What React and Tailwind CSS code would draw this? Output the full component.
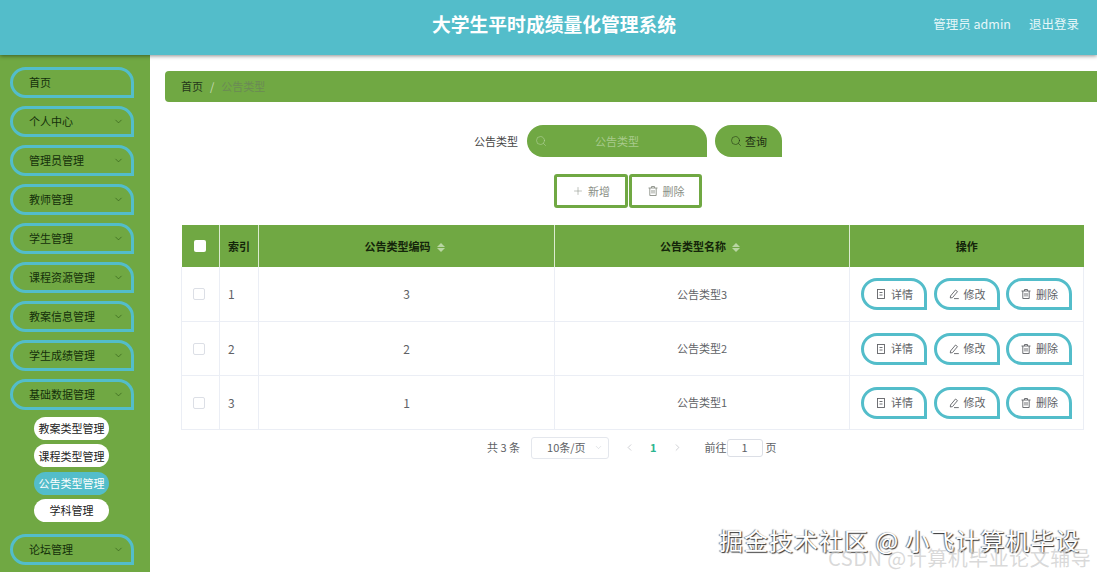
import { ChevronDown, ChevronLeft, ChevronRight, Plus, Search } from 'lucide-react';

const font = "font-['Noto_Sans_CJK_SC','Noto_Sans',sans-serif]";

const topMenus = ['个人中心', '管理员管理', '教师管理', '学生管理', '课程资源管理', '教案信息管理', '学生成绩管理', '基础数据管理'];
const subMenus = ['教案类型管理', '课程类型管理', '公告类型管理', '学科管理'];
const rows = [
  { index: 1, code: 3, name: '公告类型3' },
  { index: 2, code: 2, name: '公告类型2' },
  { index: 3, code: 1, name: '公告类型1' },
];

// element-ui style line icons, thin strokes
function TicketsIcon() {
  return (
    <svg width="12" height="12" viewBox="0 0 12 12" fill="none" stroke="currentColor" strokeWidth="0.9">
      <rect x="2.5" y="1.5" width="7" height="9" />
      <path d="M4.5 4.5H7.5M4.5 7H7.5" />
    </svg>
  );
}

function EditIcon() {
  return (
    <svg width="12" height="12" viewBox="0 0 12 12" fill="none" stroke="currentColor" strokeWidth="0.9">
      <path d="M2.5 8L7.5 2L9.5 3.6L4.5 9.6L2.3 10Z" />
      <path d="M6 10.6H10.8" />
    </svg>
  );
}

function DeleteIcon() {
  return (
    <svg width="12" height="12" viewBox="0 0 12 12" fill="none" stroke="currentColor" strokeWidth="0.9">
      <path d="M1.5 3H10.5M4.5 3V1.5H7.5V3M2.8 3V10.5H9.2V3M5 5V8.5M7 5V8.5" />
    </svg>
  );
}

function MenuItem({ label, arrow = true }) {
  return (
    <div className="flex h-[31px] w-[124px] shrink-0 items-center justify-between rounded-[20px_20px_0_20px] border-[3px] border-[#53bdca] pb-[1px] pl-[16px] pr-[7px] text-[11px] text-[#14300a]">
      <span>{label}</span>
      {arrow && <ChevronDown size={11} strokeWidth={1.4} className="text-[#2f5a16]" />}
    </div>
  );
}

function SortCaret() {
  return (
    <span className="ml-[6px] inline-flex flex-col align-middle text-[#b9d6a3]">
      <span className="mb-[1px] h-0 w-0 border-x-[4px] border-b-[4px] border-x-transparent border-b-current" />
      <span className="h-0 w-0 border-x-[4px] border-t-[4px] border-x-transparent border-t-current" />
    </span>
  );
}

function RowButton({ icon: Icon, label }) {
  return (
    <button className="flex h-[32px] w-[66px] items-center justify-center gap-[4px] rounded-[20px_20px_0_20px] border-[3px] border-[#53bdca] bg-white text-[11px] text-[#606266]">
      <Icon />
      {label}
    </button>
  );
}

export default function App() {
  return (
    <div className={`relative flex h-[572px] w-[1097px] flex-col overflow-hidden bg-white ${font}`}>
      {/* Header */}
      <header className="relative z-10 flex h-[55px] shrink-0 items-center bg-[#53bdca] pb-[7px] pr-[18px] shadow-[0_1px_4px_rgba(0,0,0,0.45)]">
        <h1 className="ml-[432px] text-[18.8px] font-bold text-white">大学生平时成绩量化管理系统</h1>
        <div className="ml-auto flex gap-[18px] text-[12.5px] text-[#e6f7f9]">
          <span>管理员 admin</span>
          <span>退出登录</span>
        </div>
      </header>

      <div className="flex min-h-0 flex-1">
        {/* Sidebar */}
        <aside className="flex w-[150px] shrink-0 flex-col items-start bg-[#70a843] pl-[10px] pt-[12px]">
          <div className="flex flex-col gap-[8px]">
            <MenuItem label="首页" arrow={false} />
            {topMenus.map((m) => (
              <MenuItem key={m} label={m} />
            ))}
          </div>
          <div className="ml-[24px] mt-[7px] flex flex-col gap-[4.4px]">
            {subMenus.map((m) => (
              <div
                key={m}
                className={`flex h-[23px] w-[75px] items-center justify-center rounded-full text-[11px] ${
                  m === '公告类型管理' ? 'bg-[#53bdca] text-white' : 'bg-white text-[#222222]'
                }`}
              >
                {m}
              </div>
            ))}
          </div>
          <div className="mt-[12px]">
            <MenuItem label="论坛管理" />
          </div>
        </aside>

        {/* Main */}
        <main className="min-w-0 flex-1 pl-[15px] pt-[16px]">
          <div className="flex h-[31px] items-center rounded-l-[4px] bg-[#70a843] pb-[1px] pl-[16px] text-[11px]">
            <span className="text-[#24361a]">首页</span>
            <span className="mx-[7px] text-[#c9dcb9]">/</span>
            <span className="text-[#6b8a55]">公告类型</span>
          </div>

          {/* Search */}
          <div className="mt-[23px] flex h-[32px] items-center pl-[309px]">
            <span className="w-[53px] text-[11px] text-[#444444]">公告类型</span>
            <div className="relative flex h-[32px] w-[180px] items-center justify-center rounded-[20px_20px_0_20px] bg-[#70a843] text-[11px] text-[#a9cb8d]">
              <Search size={12} strokeWidth={1.1} className="absolute left-[8px] top-[10px] text-[#b8d4a2]" />
              公告类型
            </div>
            <button className="ml-[8px] flex h-[32px] w-[67px] items-center justify-center gap-[3px] rounded-[20px_20px_0_20px] bg-[#70a843] text-[11px] text-[#1d2f12]">
              <Search size={12} strokeWidth={1.1} />
              查询
            </button>
          </div>

          {/* Actions */}
          <div className="mt-[17px] flex pl-[389px]">
            <button className="flex h-[34px] w-[74px] items-center justify-center gap-[4px] rounded-[3px] border-[3px] border-[#70a843] text-[11px] text-[#8a8f86]">
              <Plus size={12} strokeWidth={1.1} />
              新增
            </button>
            <button className="ml-[1px] flex h-[34px] w-[73px] items-center justify-center gap-[4px] rounded-[3px] border-[3px] border-[#70a843] text-[11px] text-[#8a8f86]">
              <DeleteIcon />
              删除
            </button>
          </div>

          {/* Table */}
          <table className="ml-[16px] mt-[17px] w-[902px] table-fixed border-collapse text-[11px] text-[#606266]">
            <colgroup>
              <col className="w-[38px]" />
              <col className="w-[39px]" />
              <col className="w-[296px]" />
              <col className="w-[295px]" />
              <col className="w-[234px]" />
            </colgroup>
            <thead>
              <tr className="h-[42px] bg-[#70a843] font-bold text-[#14250a]">
                <th className="border-r border-[#dcebd0]">
                  <span className="mx-auto block h-[12px] w-[12px] rounded-[2px] bg-white" />
                </th>
                <th className="border-r border-[#dcebd0] pl-[8px] text-left">索引</th>
                <th className="border-r border-[#dcebd0] pr-[4px]">公告类型编码<SortCaret /></th>
                <th className="border-r border-[#dcebd0] pr-[4px]">公告类型名称<SortCaret /></th>
                <th>操作</th>
              </tr>
            </thead>
            <tbody>
              {rows.map((r) => (
                <tr key={r.index} className="h-[54px] border-b border-[#ebeef5] [&>td]:pt-[1px]">
                  <td className="border-x border-[#ebeef5]">
                    <span className="ml-[11px] block h-[12px] w-[12px] rounded-[2px] border border-[#dcdfe6]" />
                  </td>
                  <td className="border-r border-[#ebeef5] pl-[8px] text-[12px]">{r.index}</td>
                  <td className="border-r border-[#ebeef5] text-center text-[12px]">{r.code}</td>
                  <td className="border-r border-[#ebeef5] text-center">{r.name}</td>
                  <td className="border-r border-[#ebeef5]">
                    <div className="flex gap-[6.5px] pl-[11px]">
                      <RowButton icon={TicketsIcon} label="详情" />
                      <RowButton icon={EditIcon} label="修改" />
                      <RowButton icon={DeleteIcon} label="删除" />
                    </div>
                  </td>
                </tr>
              ))}
            </tbody>
          </table>

          {/* Pagination */}
          <div className="mt-[7px] flex h-[22px] items-center pl-[322px] text-[11px] text-[#606266]">
            <span>共 3 条</span>
            <div className="ml-[11px] flex h-[22px] w-[78px] items-center justify-between rounded-[3px] border border-[#e4e7ed] pl-[15px] pr-[5px]">
              10条/页
              <ChevronDown size={9} strokeWidth={1.2} className="text-[#c0c4cc]" />
            </div>
            <ChevronLeft size={11} strokeWidth={1.2} className="ml-[15px] text-[#a8abb2]" />
            <span className="ml-[15px] font-bold text-[#2bb58f]">1</span>
            <ChevronRight size={11} strokeWidth={1.2} className="ml-[15px] text-[#a8abb2]" />
            <span className="ml-[22px]">前往</span>
            <div className="flex h-[18px] w-[36px] items-center justify-center rounded-[3px] border border-[#dcdfe6]">1</div>
            <span className="ml-[3px]">页</span>
          </div>
        </main>
      </div>

      {/* Watermarks */}
      <div className="absolute left-[719px] top-[524px] whitespace-nowrap text-[24px] leading-[32px] tracking-[1px] text-white [text-shadow:1px_1px_1px_#333,-1px_0_1px_#777]">
        掘金技术社区 @ 小飞计算机毕设
      </div>
      <div className="absolute left-[828px] top-[546px] whitespace-nowrap text-[20px] leading-[24px] tracking-[0.5px] text-[#c9c9c9]/70">
        CSDN @计算机毕业论文辅导
      </div>
    </div>
  );
}
